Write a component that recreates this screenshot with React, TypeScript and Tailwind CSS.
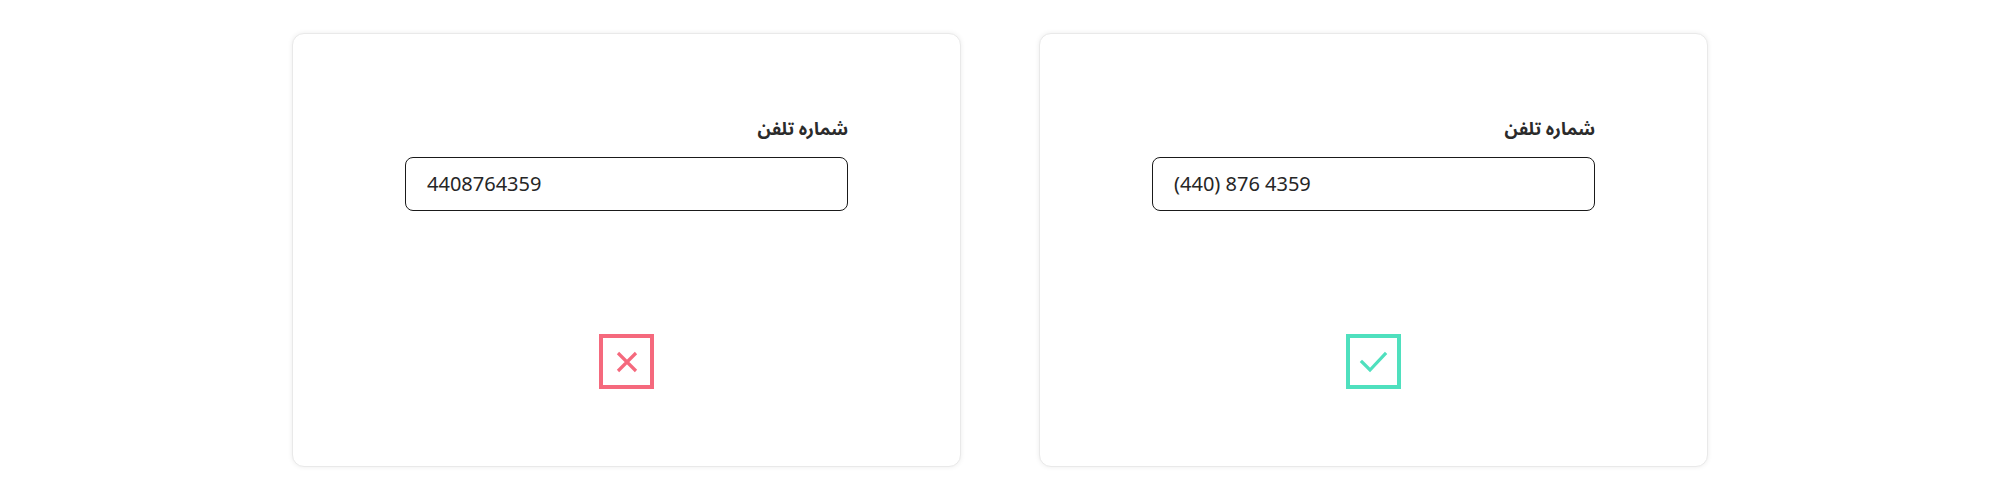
import React from "react";

function Card({ value, ok }: { value: string; ok: boolean }) {
  return (
    <div className="w-[669px] h-[434px] bg-white rounded-[12px] border border-[#e9e9e9] shadow-[0_0_5px_rgba(0,0,0,0.08)] flex flex-col items-center pt-[80px]">
      <div className="w-[443px] flex flex-col">
        <div
          dir="rtl"
          className="h-[30px] leading-[30px] text-[18px] font-bold text-[#2b2b2b] text-right font-['Noto_Sans_Arabic','DejaVu_Sans',sans-serif]"
        >
          شماره تلفن
        </div>
        <div className="mt-[13px] h-[54px] rounded-[8px] border border-[#1a1a1a] flex items-center pl-[21px]">
          <span className="text-[20px] text-[#262626] font-['Noto_Sans','Open_Sans',sans-serif]">
            {value}
          </span>
        </div>
      </div>
      <div
        className={
          ok
            ? "mt-[123px] w-[55px] h-[55px] border-[4px] flex items-center justify-center border-[#4fe0be]"
            : "mt-[123px] w-[55px] h-[55px] border-[4px] flex items-center justify-center border-[#f5697d]"
        }
      >
        {ok ? (
          <svg width="30" height="24" viewBox="0 0 30 24" fill="none">
            <path d="M3 12 L11 20 L26 4" stroke="#4fe0be" strokeWidth="3.2" strokeLinecap="square" />
          </svg>
        ) : (
          <svg width="24" height="24" viewBox="0 0 24 24" fill="none">
            <path d="M3 3 L21 21 M21 3 L3 21" stroke="#f5697d" strokeWidth="3.2" />
          </svg>
        )}
      </div>
    </div>
  );
}

export default function App() {
  return (
    <div className="w-[2000px] h-[500px] bg-white flex justify-center gap-[78px] pt-[33px]">
      <Card value="4408764359" ok={false} />
      <Card value="(440) 876 4359" ok={true} />
    </div>
  );
}
